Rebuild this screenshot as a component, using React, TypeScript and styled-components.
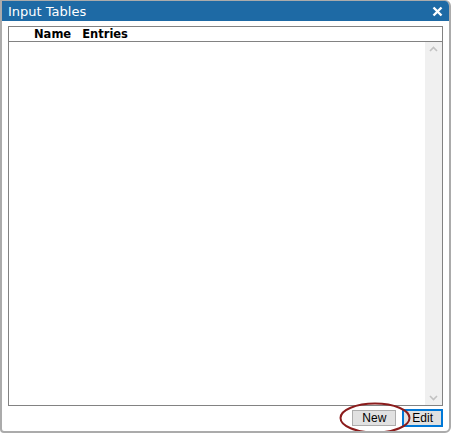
import React from "react";
import styled, { createGlobalStyle } from "styled-components";

const Global = createGlobalStyle`
  html, body { margin: 0; padding: 0; background: #ffffff; }
  body { font-family: "DejaVu Sans", Verdana, sans-serif; }
`;

const Window = styled.div`
  box-sizing: border-box;
  width: 451px;
  height: 433px;
  border: 2px solid #ababab;
  border-top-width: 1px;
  border-radius: 0 6px 6px 4px;
  background: #ffffff;
  display: flex;
  flex-direction: column;
  overflow: hidden;
`;

const TitleBar = styled.div`
  height: 20px;
  background: #1e6aa5;
  color: #ffffff;
  display: flex;
  align-items: center;
  justify-content: space-between;
  padding: 0 6px 0 6px;
  font-family: "DejaVu Sans", Verdana, sans-serif;
  font-size: 13px;
`;

const Title = styled.span``;

const CloseBtn = styled.span`
  display: flex;
  align-items: center;
`;

const Body = styled.div`
  flex: 1;
  display: flex;
  flex-direction: column;
  padding: 5px 6px 4px 6px;
  gap: 2px;
`;

const Table = styled.div`
  flex: 1;
  border: 1px solid #828282;
  display: flex;
  flex-direction: column;
`;

const HeaderRow = styled.div`
  height: 14px;
  border-bottom: 1px solid #828282;
  display: flex;
  align-items: center;
  padding-left: 25px;
  gap: 11px;
  font-family: "DejaVu Sans", Verdana, sans-serif;
  font-weight: bold;
  font-size: 11.5px;
  color: #000000;
`;

const Rows = styled.div`
  flex: 1;
  display: flex;
  justify-content: flex-end;
`;

const Scrollbar = styled.div`
  width: 17px;
  background: #f0f0f0;
  display: flex;
  flex-direction: column;
  justify-content: space-between;
  align-items: center;
  padding: 4px 0;
`;

const Footer = styled.div`
  display: flex;
  justify-content: flex-end;
  align-items: center;
  gap: 6px;
  height: 19px;
`;

const BtnWrap = styled.div`
  position: relative;
  display: flex;
`;

const Button = styled.button<{ $focused?: boolean }>`
  box-sizing: border-box;
  height: ${(p) => (p.$focused ? "18px" : "16px")};
  padding: 0 ${(p) => (p.$focused ? "8px" : "9px")};
  background: #e1e1e1;
  border: ${(p) => (p.$focused ? "2px solid #0078d7" : "1px solid #adadad")};
  font-family: "Liberation Sans", Arial, sans-serif;
  font-size: 12px;
  color: #000000;
  line-height: 1;
  display: flex;
  align-items: center;
`;

const Ellipse = styled.svg`
  position: absolute;
  left: -13px;
  top: -8px;
  pointer-events: none;
`;

const Chevron = ({ up }: { up?: boolean }) => (
  <svg width="9" height="6" viewBox="0 0 9 6">
    <path
      d={up ? "M1 5 L4.5 1.5 L8 5" : "M1 1 L4.5 4.5 L8 1"}
      stroke="#c2c2c2"
      strokeWidth="1.6"
      fill="none"
    />
  </svg>
);

export default function App() {
  return (
    <>
      <Global />
      <Window>
        <TitleBar>
          <Title>Input Tables</Title>
          <CloseBtn>
            <svg width="11" height="11" viewBox="0 0 11 11">
              <path d="M1.5 1.5 L9.5 9.5 M9.5 1.5 L1.5 9.5" stroke="#ffffff" strokeWidth="2.4" />
            </svg>
          </CloseBtn>
        </TitleBar>
        <Body>
          <Table>
            <HeaderRow>
              <span>Name</span>
              <span>Entries</span>
            </HeaderRow>
            <Rows>
              <Scrollbar>
                <Chevron up />
                <Chevron />
              </Scrollbar>
            </Rows>
          </Table>
          <Footer>
            <BtnWrap>
              <Button>New</Button>
              <Ellipse width="72" height="32" viewBox="0 0 72 32">
                <ellipse cx="36" cy="16" rx="34.5" ry="14.5" fill="none" stroke="#8b1c1c" strokeWidth="2" />
              </Ellipse>
            </BtnWrap>
            <Button $focused>Edit</Button>
          </Footer>
        </Body>
      </Window>
    </>
  );
}
